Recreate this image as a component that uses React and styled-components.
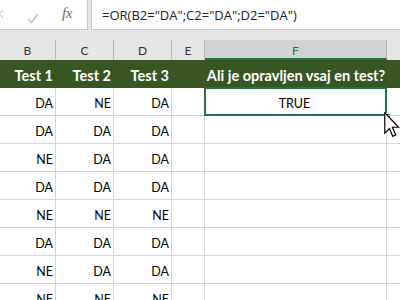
import React from 'react';
import styled, { createGlobalStyle } from 'styled-components';

const GlobalStyle = createGlobalStyle`
  body {
    margin: 0;
    background: #ffffff;
    overflow: hidden;
  }
`;

const columns = [
  { key: 'B', width: 56 },
  { key: 'C', width: 58 },
  { key: 'D', width: 58 },
  { key: 'E', width: 33 },
  { key: 'F', width: 182 },
  { key: 'G', width: 14 }
];
const template = columns.map(c => c.width + 'px').join(' ');

const headings = ['Test 1', 'Test 2', 'Test 3', '', 'Ali je opravljen vsaj en test?', ''];

const rows = [
  ['DA', 'NE', 'DA'],
  ['DA', 'DA', 'DA'],
  ['NE', 'DA', 'DA'],
  ['DA', 'DA', 'DA'],
  ['NE', 'NE', 'NE'],
  ['DA', 'DA', 'DA'],
  ['NE', 'DA', 'DA'],
  ['NE', 'NE', 'NE']
];

const Window = styled.div`
  width: 400px;
  height: 300px;
  overflow: hidden;
  background: #e6e6e6;
  font-family: Lato, "Liberation Sans", sans-serif;
`;

const FormulaBar = styled.div`
  display: flex;
  height: 29px;
  gap: 3px;
  margin-bottom: 11px;
`;

const Box = styled.div`
  background: #ffffff;
  border: 1px solid #c6c6c6;
  border-top: none;
  box-sizing: border-box;
  height: 30px;
  position: relative;
`;

const NameArea = styled(Box)`
  width: 88px;
  border-left: none;
  display: flex;
  align-items: center;
`;

const FormulaInput = styled(Box)`
  flex: 1;
  border-right: none;
  padding-left: 10px;
  display: flex;
  align-items: center;
  font-family: "Open Sans", "Noto Sans", sans-serif;
  font-size: 13px;
  color: #222;
  white-space: nowrap;
`;

const Fx = styled.span`
  position: absolute;
  left: 62px;
  top: 5px;
  font-family: "Liberation Serif", serif;
  font-style: italic;
  font-size: 15px;
  color: #6e6e6e;
  letter-spacing: -0.5px;
`;

const Icon = styled.svg`
  position: absolute;
  top: ${p => p.$top}px;
  left: ${p => p.$left}px;
`;

const Sheet = styled.div`
  background: #ffffff;
`;

const Row = styled.div`
  display: grid;
  grid-template-columns: ${template};
  height: ${p => p.$height}px;
`;

const ColHead = styled.div`
  display: flex;
  align-items: center;
  justify-content: center;
  box-sizing: border-box;
  background: ${p => (p.$active ? '#d2d2d2' : '#e6e6e6')};
  color: ${p => (p.$active ? '#217346' : '#333333')};
  border-right: 1px solid ${p => (p.$last ? 'transparent' : '#b5b5b5')};
  border-bottom: 2px solid ${p => (p.$active ? '#217346' : '#e6e6e6')};
  font-size: 12px;
  padding-top: 2px;
`;

const TitleCell = styled.div`
  background: #375623;
  color: #ffffff;
  font-weight: 700;
  font-size: 14.5px;
  display: flex;
  align-items: center;
  justify-content: ${p => (p.$center ? 'center' : 'flex-end')};
  padding-right: ${p => (p.$center ? 0 : 3)}px;
  padding-top: 2px;
  white-space: nowrap;
`;

const Cell = styled.div`
  position: relative;
  box-sizing: border-box;
  border-right: 1px solid #d4d4d4;
  border-bottom: 1px solid #d4d4d4;
  display: flex;
  align-items: center;
  justify-content: ${p => (p.$center ? 'center' : 'flex-end')};
  padding: 3px 2px 0 0;
  font-size: 12.5px;
  color: #000000;
`;

const Selection = styled.div`
  position: absolute;
  top: -1px;
  left: -1px;
  right: -1px;
  bottom: -1px;
  border: 2px solid #217346;
  pointer-events: none;
`;

const FillHandle = styled.div`
  position: absolute;
  right: -5px;
  bottom: -5px;
  width: 5px;
  height: 5px;
  background: #217346;
  border: 1px solid #ffffff;
`;

const Cursor = styled.svg`
  position: absolute;
  left: 179px;
  top: 24px;
  z-index: 2;
`;

export default function App() {
  return (
    <Window>
      <GlobalStyle />
      <FormulaBar>
        <NameArea>
          <Icon $left={-6} $top={9} width="10" height="10" viewBox="0 0 10 10">
            <path d="M1 1 L9 9 M9 1 L1 9" stroke="#cfcfcf" strokeWidth="1.3" fill="none" />
          </Icon>
          <Icon $left={27} $top={13} width="12" height="11" viewBox="0 0 12 11">
            <path d="M1 6 L4.5 9.5 L11 1" stroke="#c4c4c4" strokeWidth="1.6" fill="none" />
          </Icon>
          <Fx>fx</Fx>
        </NameArea>
        <FormulaInput>=OR(B2="DA";C2="DA";D2="DA")</FormulaInput>
      </FormulaBar>
      <Sheet>
        <Row $height={20}>
          {columns.map((c, i) => (
            <ColHead key={c.key} $active={c.key === 'F'} $last={i === columns.length - 1}>
              {c.key === 'G' ? '' : c.key}
            </ColHead>
          ))}
        </Row>
        <Row $height={28}>
          {headings.map((h, i) => (
            <TitleCell key={i} $center={i === 4}>{h}</TitleCell>
          ))}
        </Row>
        {rows.map((r, ri) => (
          <Row key={ri} $height={28}>
            {r.map((v, ci) => (
              <Cell key={ci}>{v}</Cell>
            ))}
            <Cell />
            <Cell $center>
              {ri === 0 && 'TRUE'}
              {ri === 0 && (
                <>
                  <Selection />
                  <FillHandle />
                  <Cursor width="16" height="25" viewBox="0 0 12 19">
                    <path
                      d="M0.5 0.5 L0.5 16 L4 12.6 L6.6 18.5 L8.8 17.5 L6.3 11.6 L11 11.6 Z"
                      fill="#ffffff"
                      stroke="#000000"
                      strokeWidth="0.9"
                      strokeLinejoin="miter"
                    />
                  </Cursor>
                </>
              )}
            </Cell>
            <Cell />
          </Row>
        ))}
      </Sheet>
    </Window>
  );
}
